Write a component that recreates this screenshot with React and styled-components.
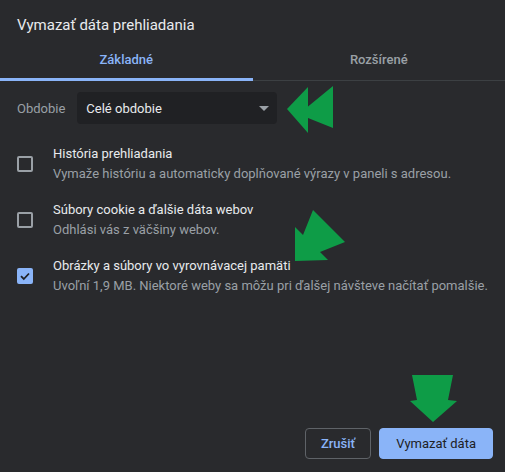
import React from 'react';
import styled, { createGlobalStyle } from 'styled-components';

const GlobalStyle = createGlobalStyle`
    html, body {
        margin: 0;
        padding: 0;
        background: #292a2d;
    }
    body {
        font-family: Roboto, "Liberation Sans", Arial, sans-serif;
    }
`;

const Dialog = styled.section`
    position: relative;
    box-sizing: border-box;
    width: 505px;
    height: 472px;
    background-color: #292a2d;
    display: flex;
    flex-direction: column;
    overflow: hidden;
`;

const Title = styled.h1`
    margin: 0;
    padding: 15px 17px 0;
    font-size: 15px;
    line-height: 20px;
    font-weight: 400;
    color: #e8eaed;
`;

const TabBar = styled.div`
    margin-top: 6px;
    display: flex;
    border-bottom: 1px solid #3c4043;
`;

const Tab = styled.div`
    flex: 1;
    height: 37px;
    margin-bottom: -1px;
    display: flex;
    align-items: center;
    justify-content: center;
    font-size: 13px;
    font-weight: 500;
    color: ${(props) => (props.active ? '#8ab4f8' : '#9aa0a6')};
    border-bottom: 3px solid ${(props) => (props.active ? '#8ab4f8' : 'transparent')};
`;

const PeriodRow = styled.div`
    margin-top: 11px;
    padding: 0 17px;
    display: flex;
    align-items: center;
    gap: 12px;
`;

const Label = styled.span`
    font-size: 13px;
    color: #9aa0a6;
`;

const Select = styled.div`
    box-sizing: border-box;
    width: 200px;
    height: 32px;
    padding: 0 8px 0 9px;
    border-radius: 4px;
    background-color: #202124;
    display: flex;
    align-items: center;
    justify-content: space-between;
    font-size: 13px;
    font-weight: 400;
    color: #e8eaed;
`;

const Caret = styled.span`
    width: 0;
    height: 0;
    border-left: 5px solid transparent;
    border-right: 5px solid transparent;
    border-top: 5px solid #9aa0a6;
`;

const List = styled.div`
    margin-top: 12px;
    display: flex;
    flex-direction: column;
`;

const Row = styled.label`
    padding: 8px 17px;
    display: flex;
    align-items: center;
    gap: 20px;
`;

const Box = styled.span`
    box-sizing: border-box;
    flex: none;
    width: 16px;
    height: 16px;
    border-radius: 2px;
    border: 2px solid ${(props) => (props.checked ? '#8ab4f8' : '#9aa0a6')};
    background-color: ${(props) => (props.checked ? '#8ab4f8' : 'transparent')};
    display: flex;
    align-items: center;
    justify-content: center;
`;

const RowText = styled.div`
    display: flex;
    flex-direction: column;
`;

const RowTitle = styled.span`
    font-size: 13px;
    line-height: 20px;
    font-weight: 400;
    color: #e8eaed;
`;

const RowDesc = styled.span`
    font-size: 13px;
    line-height: 20px;
    color: #9aa0a6;
`;

const Footer = styled.div`
    margin-top: auto;
    padding: 0 12px 13px;
    display: flex;
    justify-content: flex-end;
    gap: 8px;
`;

const Button = styled.button`
    box-sizing: border-box;
    height: 31px;
    padding: 0 ${(props) => (props.primary ? '16px' : '15px')};
    border-radius: 4px;
    border: 1px solid ${(props) => (props.primary ? '#8ab4f8' : '#5f6368')};
    background-color: ${(props) => (props.primary ? '#8ab4f8' : 'transparent')};
    color: ${(props) => (props.primary ? '#202124' : '#8ab4f8')};
    font-family: Roboto, "Liberation Sans", Arial, sans-serif;
    font-size: 13px;
    font-weight: ${(props) => (props.primary ? 400 : 500)};
    cursor: pointer;
`;

const Annotations = styled.svg`
    position: absolute;
    left: 0;
    top: 0;
    width: 505px;
    height: 472px;
    pointer-events: none;
`;

const items = [
    {
        title: 'História prehliadania',
        desc: 'Vymaže históriu a automaticky doplňované výrazy v paneli s adresou.',
        checked: false,
    },
    {
        title: 'Súbory cookie a ďalšie dáta webov',
        desc: 'Odhlási vás z väčšiny webov.',
        checked: false,
    },
    {
        title: 'Obrázky a súbory vo vyrovnávacej pamäti',
        desc: 'Uvoľní 1,9 MB. Niektoré weby sa môžu pri ďalšej návšteve načítať pomalšie.',
        checked: true,
    },
];

const Check = () => (
    <svg width="12" height="12" viewBox="0 0 12 12">
        <path d="M2 6.2 L4.8 9 L10 3.5" fill="none" stroke="#202124" strokeWidth="1.8" />
    </svg>
);

export default function App() {
    return (
        <>
            <GlobalStyle />
            <Dialog>
                <Title>Vymazať dáta prehliadania</Title>
                <TabBar>
                    <Tab active>Základné</Tab>
                    <Tab>Rozšírené</Tab>
                </TabBar>
                <PeriodRow>
                    <Label>Obdobie</Label>
                    <Select>
                        Celé obdobie
                        <Caret />
                    </Select>
                </PeriodRow>
                <List>
                    {items.map((item) => (
                        <Row key={item.title}>
                            <Box checked={item.checked}>{item.checked && <Check />}</Box>
                            <RowText>
                                <RowTitle>{item.title}</RowTitle>
                                <RowDesc>{item.desc}</RowDesc>
                            </RowText>
                        </Row>
                    ))}
                </List>
                <Footer>
                    <Button>Zrušiť</Button>
                    <Button primary>Vymazať dáta</Button>
                </Footer>
                <Annotations viewBox="0 0 505 472">
                    <g fill="#0e9c47">
                        <polygon points="287,109 308,87 308,133" />
                        <polygon points="305,109 333,86 333,128 308,118 308,100" />
                        <polygon points="295,227 303,235 313,210 345,242 320,252 328,260 295,261" />
                        <polygon points="412,375 453,375 448,400 457,401 433,422 410,401 417,400" />
                    </g>
                </Annotations>
            </Dialog>
        </>
    );
}
